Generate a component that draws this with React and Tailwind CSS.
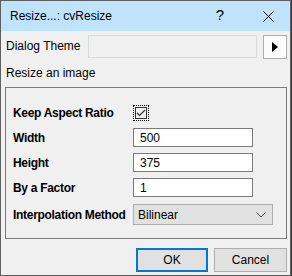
import React from 'react';

const font = { fontFamily: '"Liberation Sans", Arial, sans-serif' };

const Field = ({ label, children }) => (
    <div className="flex items-center h-[19px]">
        <span className="w-[120px] font-bold text-[12px] tracking-[-0.3px] text-black">{label}</span>
        {children}
    </div>
);

const TextBox = ({ value }) => (
    <div className="w-[120px] h-[19px] bg-white border border-[#7a7a7a] px-[6px] flex items-center text-[12px] text-black">
        {value}
    </div>
);

export default function App() {
    return (
        <div className="w-[292px] h-[276px] bg-[#3a3a3a]" style={font}>
            <div className="w-[291px] h-[276px] border border-[#5f5f5f] bg-[#f0f0f0] flex flex-col">
                {/* title bar */}
                <div className="h-[30px] bg-[#bfe3fa] flex items-center pl-[9px] text-[12px] text-black">
                    <span className="flex-1">Resize...: cvResize</span>
                    <span className="text-[15px] mr-[39px] mt-[-1px]">?</span>
                    <svg width="11" height="11" viewBox="0 0 11 11" className="mr-[16px]">
                        <path d="M0.5 0.5L10.5 10.5M10.5 0.5L0.5 10.5" stroke="#000" strokeWidth="1" />
                    </svg>
                </div>

                {/* theme row */}
                <div className="flex items-start mt-[4px] h-[24px]">
                    <span className="ml-[5px] mt-[2px] w-[82px] text-[12px] text-black">Dialog Theme</span>
                    <div className="w-[169px] h-[23px] border border-[#d9d9d9] bg-[#f0f0f0]"></div>
                    <div className="ml-[6px] w-[24px] h-[24px] border border-[#adadad] bg-[#fbfbfb] flex items-center justify-center">
                        <svg width="6" height="10" viewBox="0 0 6 10">
                            <path d="M0 0L6 5L0 10Z" fill="#000" />
                        </svg>
                    </div>
                </div>

                <div className="ml-[5px] mt-[6px] text-[12px] text-black leading-[16px]">Resize an image</div>

                {/* group box */}
                <div className="ml-[4px] mt-[6px] w-[282px] h-[152px] border border-[#7a7a7a] pl-[7px] pt-[15px] flex flex-col gap-[6px]">
                    <Field label="Keep Aspect Ratio">
                        <div className="w-[16px] h-[16px] border border-dotted border-black p-[1px]">
                            <div className="w-[12px] h-[12px] border border-[#333] bg-[#f0f0f0] flex items-center justify-center">
                                <svg width="10" height="8" viewBox="0 0 10 8">
                                    <path d="M1 4L3.5 6.5L9 1" stroke="#333" strokeWidth="1.2" fill="none" />
                                </svg>
                            </div>
                        </div>
                    </Field>
                    <Field label="Width"><TextBox value="500" /></Field>
                    <Field label="Height"><TextBox value="375" /></Field>
                    <Field label="By a Factor"><TextBox value="1" /></Field>
                    <div className="flex items-center h-[21px] mt-[1px]">
                        <span className="w-[120px] font-bold text-[12px] tracking-[-0.3px] text-black">Interpolation Method</span>
                        <div className="w-[140px] h-[21px] bg-[#e1e1e1] border border-[#adadad] flex items-center justify-between px-[4px] text-[12px] text-black">
                            <span>Bilinear</span>
                            <svg width="10" height="6" viewBox="0 0 10 6" className="mr-[2px]">
                                <path d="M0.5 0.5L5 5L9.5 0.5" stroke="#444" strokeWidth="1" fill="none" />
                            </svg>
                        </div>
                    </div>
                </div>

                {/* buttons */}
                <div className="flex mt-[9px] ml-[135px] gap-[6px]">
                    <button className="w-[72px] h-[24px] bg-[#e1e1e1] border-2 border-[#0078d7] text-[12px] text-black">OK</button>
                    <button className="w-[73px] h-[24px] bg-[#e1e1e1] border border-[#adadad] text-[12px] text-black">Cancel</button>
                </div>
            </div>
        </div>
    );
}
